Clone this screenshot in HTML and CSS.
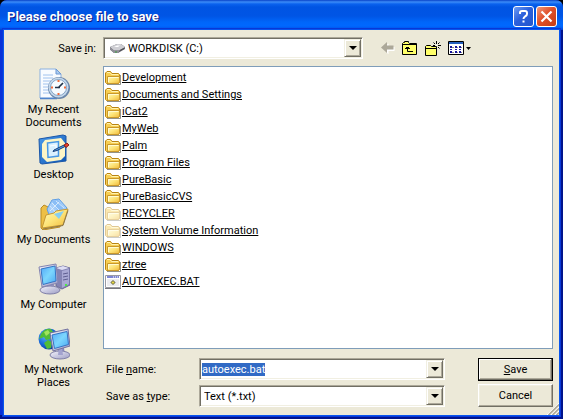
FILE: index.html
```html
<!DOCTYPE html>
<html lang="en">
<head>
<meta charset="utf-8">
<title>Please choose file to save</title>
<link rel="stylesheet" href="styles.css">
</head>
<body>
<svg class="defs" aria-hidden="true">
  <defs>
    <linearGradient id="gold" x1="0" y1="0" x2="1" y2="1">
      <stop offset="0" stop-color="#fffbc0"/><stop offset=".5" stop-color="#fde478"/><stop offset="1" stop-color="#f0b93a"/>
    </linearGradient>
    <linearGradient id="screen" x1="0" y1="0" x2="1" y2="1">
      <stop offset="0" stop-color="#52a8f8"/><stop offset=".5" stop-color="#7cd6fd"/><stop offset="1" stop-color="#4aa8f2"/>
    </linearGradient>
    <linearGradient id="metal" x1="0" y1="0" x2="1" y2="1">
      <stop offset="0" stop-color="#f4f4fc"/><stop offset="1" stop-color="#9c9cc4"/>
    </linearGradient>
    <linearGradient id="blue" x1="0" y1="0" x2="1" y2="1">
      <stop offset="0" stop-color="#4c9cec"/><stop offset="1" stop-color="#0c54b4"/>
    </linearGradient>
    <radialGradient id="globe" cx=".35" cy=".35" r=".7">
      <stop offset="0" stop-color="#58b8fc"/><stop offset=".6" stop-color="#1868d8"/><stop offset="1" stop-color="#0a3c9c"/>
    </radialGradient>
    <symbol id="folder" viewBox="0 0 16 16">
      <path d="M2 14.500h13.500V5" fill="none" stroke="#77776c" stroke-opacity=".8"/>
      <path d="M.5 12.500V3l1.500-1.500h3.500L7 3.500h6.500l1 1v8l-1 1h-12z" fill="#f7ce52" stroke="#b98413"/>
      <path d="M2 2.500h3l1.500 2H13" fill="none" stroke="#fff3b0"/>
      <path d="M2.500 13V6.500h12V12l-1 1.500H3z" fill="url(#gold)" stroke="#c9982b"/>
      <path d="M3.500 12V7.500h10" fill="none" stroke="#fffbd0"/>
    </symbol>
    <symbol id="batch" viewBox="0 0 16 16">
      <path d="M.5 1.500h15v12H.5z" fill="#fff" stroke="#9a9aa2"/>
      <path d="M0 14.500h16" stroke="#77777f"/>
      <path d="M2 2h12v2H2z" fill="#7d85d4"/>
      <path d="M8 3h1M10 3h1M12 3h1" stroke="#fff"/>
      <path d="M2 5h12v7H2z" fill="#ececf0"/>
      <path d="M8 6v5M5.500 8.500h5M6.500 7l3 3M9.500 7l-3 3" stroke="#84847c"/>
      <circle cx="8" cy="8.500" r="1.500" fill="#e8d840" stroke="#727246" stroke-width=".7"/>
    </symbol>
  </defs>
</svg>

<main class="window">
  <header class="titlebar">
    <h1>Please choose file to save</h1>
    <button class="caption help" type="button" aria-label="Help">
      <svg viewBox="0 0 19 19"><path d="M6 7V5.500Q6 4 8 4h3q2 0 2 2v1q0 1.500-2 2.500Q9.500 10.500 9.500 12M9.500 13.500v2" fill="none" stroke="#fff" stroke-width="2"/></svg>
    </button>
    <button class="caption close" type="button" aria-label="Close">
      <svg viewBox="0 0 19 19"><path d="M4.500 4.500l10 10M14.500 4.500l-10 10" stroke="#fff" stroke-width="2.200"/></svg>
    </button>
  </header>

  <form class="content">
    <label class="look-label" for="look">Save <u>i</u>n:</label>
    <div class="toolbar">
      <div class="field look">
        <svg class="disk" viewBox="0 0 16 16" aria-hidden="true">
          <path d="M1 9.500l4 3.500h4l7-4V7l-4-3H8L1 7z" fill="#66666c"/>
          <path d="M1 7l7-3h4l4 3-6 3.500H5z" fill="#cfcfd4"/>
          <path d="M1 7l4 3.500h5V13H5L1 9.500z" fill="#909098"/>
          <path d="M5 7l3-1.500h3L9 7z" fill="#fff"/>
          <path d="M11 10.500l4-2" stroke="#4c4c54"/>
          <path d="M6 12h2" stroke="#3c9c3c"/>
        </svg>
        <select id="look"><option>WORKDISK (C:)</option></select>
        <span class="arrow"></span>
      </div>
      <button class="tool back" type="button" aria-label="Back" disabled>
        <svg viewBox="0 0 14 12"><path d="M2 6.500L7.500 1.500V5H13.500v4H7.500v3.500z" fill="#fff"/><path d="M0 5.500L6 0v3.500h6.500v4H6V11z" fill="#aca899"/></svg>
      </button>
      <button class="tool up" type="button" aria-label="Up one level">
        <svg viewBox="0 0 15 14"><path d="M.5 13.500v-11l1-1h1v-1h4v1l1 1h7v11z" fill="#ffff6a" stroke="#000"/><path d="M1 3.500h13" stroke="#000"/><path d="M5.500 6v4.500H11" fill="none" stroke="#000"/><path d="M3 7.500h5M4 6.500h3" stroke="#000"/></svg>
      </button>
      <button class="tool new" type="button" aria-label="Create new folder">
        <svg viewBox="0 0 16 15"><path d="M.5 14.500v-9l1-1h4l1 1h5v9z" fill="#ffff6a" stroke="#000"/><path d="M1 7.500h11" stroke="#000"/><path d="M11.500 0v3M11.500 6v3M8 4.500h2M13 4.500h3M8.500 1.500l1.500 1.500M14.500 1.500L13 3M14.500 7.500L13 6" stroke="#000"/><path d="M11 4.500h1" stroke="#fff"/></svg>
      </button>
      <button class="tool view" type="button" aria-label="View menu">
        <svg viewBox="0 0 23 14"><path d="M.5.5h15v13H.5z" fill="#fff" stroke="#000"/><path d="M1 1h14v2H1z" fill="#235fbd"/><path d="M2 5h2v2H2zM7 5h2v2H7zM11 5h2v2h-2zM2 8h2v1H2zM7 8h2v1H7zM11 8h2v1h-2zM2 10h2v2H2zM7 10h2v2H7zM11 10h2v2h-2z" fill="#15159c"/><path d="M4 6.500h2M9 6.500h1M13 6.500h1M4 11.500h2M9 11.500h1M13 11.500h1" stroke="#888"/><path d="M18 6h5l-2.500 3z"/></svg>
      </button>
    </div>

    <nav class="places">
      <a href="#recent">
        <svg viewBox="0 0 32 32" aria-hidden="true">
          <path d="M2 1h16l5 5v24H2z" fill="#f8fbff" stroke="#8ab0e0"/>
          <path d="M18 1v5h5z" fill="#aacbf0" stroke="#6c98d4"/>
          <path d="M5 7h10M5 10h10M5 13h8M5 16h6M5 19h6M5 22h6M5 25h7" stroke="#a0c2ee"/>
          <path d="M2 30.500h17" stroke="#4f83cc" stroke-width="1.500"/>
          <circle cx="21" cy="20" r="11" fill="#6b87aa"/>
          <circle cx="20.500" cy="19.500" r="10" fill="#c4d8ec"/>
          <circle cx="20.500" cy="19.500" r="8" fill="#f6fbff" stroke="#85a3c4"/>
          <path d="M20 20l5-5M17 19.500h5" stroke="#223248" stroke-width="1.700"/>
          <path d="M19.500 12h2v2h-2zM19.500 25h2v2h-2zM13 18.500h2v2h-2zM26 18.500h2v2h-2z" fill="#ef6a3a"/>
        </svg>
        <span>My Recent<br>Documents</span>
      </a>
      <a href="#desktop">
        <svg viewBox="0 0 32 32" aria-hidden="true">
          <path d="M1 6l24-4 3 1v25L4 31l-2-1z" fill="url(#blue)" stroke="#1b57a8"/>
          <path d="M7 7l16-2 4 5v13l-4 4-14 2-5-5V11z" fill="#fdf5c6"/>
          <path d="M9.500 10l11-1.500V23L10 24.500z" fill="#d8f0ff" stroke="#4898e4" stroke-width="1.500"/>
          <path d="M12 13l6-1v8" fill="none" stroke="#fff"/>
          <path d="M16 17l10-5 1 1.500-8 4-4 1z" fill="#55a2e8" stroke="#143c78"/>
          <path d="M26 12l3-2 2 2-3 2.500z" fill="#e8402c" stroke="#8c2014"/>
        </svg>
        <span>Desktop</span>
      </a>
      <a href="#documents">
        <svg viewBox="0 0 32 32" aria-hidden="true">
          <path d="M3 10l3-3 4 2 1 2 13 2-2 16-17 3-2-2z" fill="#edbf45" stroke="#b88a24"/>
          <path d="M9 11l5-9 7-1 8 9-7 11-9 1z" fill="#a4cdf9" stroke="#5e9ee4"/>
          <path d="M14 3l6-1 6 8-5 5z" fill="#8abef6"/>
          <path d="M14 5l8 8M12 8l7 8M18 3l8 7M21 4l-9 9" stroke="#e4f2ff" stroke-width=".8"/>
          <path d="M4 30l4-13 8-2 2-2 12-2-5 16z" fill="url(#gold)" stroke="#c69833"/>
          <path d="M16 16l10-3-5 8z" fill="#86cef2"/>
          <path d="M5 31l20-3.500 5-15" fill="none" stroke="#8d7848"/>
        </svg>
        <span>My Documents</span>
      </a>
      <a href="#computer">
        <svg viewBox="0 0 32 32" aria-hidden="true">
          <path d="M18 5l7-2 7 2v17l-8 4-6-3z" fill="#8484b4" stroke="#686898"/>
          <path d="M24 8l7-2v15l-7 4z" fill="#a9a9d4"/>
          <path d="M18 5l7-2 6 2-7 2z" fill="#dedef4"/>
          <path d="M25 11l5-1M25 14l5-1M25 17l5-1" stroke="#5e5e90"/>
          <path d="M27 21h2v2h-2z" fill="#4bea40"/>
          <path d="M8 21h8l1 5H9z" fill="#9898c4"/>
          <ellipse cx="12" cy="27" rx="10" ry="4" fill="url(#metal)" stroke="#7f7fa8"/>
          <path d="M1 4l17-3 2 19-16 4z" fill="url(#metal)" stroke="#8484b0"/>
          <path d="M3 6l14-3 1 15-13 3.500z" fill="url(#screen)" stroke="#3674c4"/>
        </svg>
        <span>My Computer</span>
      </a>
      <a href="#network">
        <svg viewBox="0 0 32 32" aria-hidden="true">
          <circle cx="11" cy="11" r="10.500" fill="url(#globe)"/>
          <path d="M3 6q4-6 10-5l3 4-4 2 1 4-5 1-2-3-5 2zM10 12l4 2-1 6-4 1-3-6z" fill="#51bc38"/>
          <path d="M6 4l4-2 2 3-4 3z" fill="#a1e65c"/>
          <path d="M20 20h6l1 7h-8z" fill="#8888bc"/>
          <ellipse cx="22" cy="27" rx="10" ry="4" fill="url(#metal)" stroke="#7f7fa8"/>
          <path d="M21 19h3l1 8h-5z" fill="#a2a2ce"/>
          <path d="M12 5l18-4 2 17-17 5z" fill="url(#metal)" stroke="#71719f"/>
          <path d="M14 7l15-3.500 1.500 13-14 4z" fill="url(#screen)" stroke="#3674c4"/>
        </svg>
        <span>My Network<br>Places</span>
      </a>
    </nav>

    <ul class="files">
      <li><svg><use href="#folder"/></svg><a href="#f1">Development</a></li>
      <li><svg><use href="#folder"/></svg><a href="#f2">Documents and Settings</a></li>
      <li><svg><use href="#folder"/></svg><a href="#f3">iCat2</a></li>
      <li><svg><use href="#folder"/></svg><a href="#f4">MyWeb</a></li>
      <li><svg><use href="#folder"/></svg><a href="#f5">Palm</a></li>
      <li><svg><use href="#folder"/></svg><a href="#f6">Program Files</a></li>
      <li><svg><use href="#folder"/></svg><a href="#f7">PureBasic</a></li>
      <li><svg><use href="#folder"/></svg><a href="#f8">PureBasicCVS</a></li>
      <li class="hidden-item"><svg><use href="#folder"/></svg><a href="#f9">RECYCLER</a></li>
      <li class="hidden-item"><svg><use href="#folder"/></svg><a href="#f10">System Volume Information</a></li>
      <li><svg><use href="#folder"/></svg><a href="#f11">WINDOWS</a></li>
      <li><svg><use href="#folder"/></svg><a href="#f12">ztree</a></li>
      <li><svg><use href="#batch"/></svg><a href="#f13">AUTOEXEC.BAT</a></li>
    </ul>

    <div class="bottom">
      <div class="entries">
        <label for="name">File <u>n</u>ame:</label>
        <div class="field"><input id="name" type="text" value="autoexec.bat" spellcheck="false" autocomplete="off"><span class="arrow"></span></div>
        <label for="type">Save as <u>t</u>ype:</label>
        <div class="field"><select id="type"><option>Text (*.txt)</option></select><span class="arrow"></span></div>
      </div>
      <div class="actions">
        <button class="push default" type="button"><u>S</u>ave</button>
        <button class="push" type="button">Cancel</button>
      </div>
    </div>
  </form>
  <svg class="grip" viewBox="0 0 12 12" aria-hidden="true"><path d="M0 12L12 0M4 12l8-8M8 12l4-4" stroke="#fff"/><path d="M1.500 12L12 1.500M5.500 12L12 5.500M9.500 12L12 9.500" stroke="#aca899" stroke-width="1.600"/></svg>
</main>
<script src="script.js"></script>
</body>
</html>
```
FILE: script.js
```js
const nameField = document.getElementById("name");
nameField.focus();
nameField.select();
```
FILE: styles.css
```css
* {
  box-sizing: border-box;
}

body {
  margin: 0;
  background: #000;
  color: #000;
  font: 11px/13px Tahoma, Roboto, "Liberation Sans", sans-serif;
}

.defs {
  position: absolute;
  width: 0;
  height: 0;
}

button,
input,
select {
  font: inherit;
  color: inherit;
}

.window {
  position: relative;
  display: flex;
  flex-direction: column;
  min-height: 100vh;
  border-radius: 7px 7px 0 0;
  overflow: hidden;
  background: #00138c;
}

.titlebar {
  display: flex;
  align-items: center;
  gap: 2px;
  height: 30px;
  padding: 3px 6px 0 7px;
  background: linear-gradient(#0842c8 0, #3c8cf8 2px, #0a62ee 4px, #0054e3 7px, #0055e5 16px, #0066fa 22px, #0068ff 26px, #005af0 28px, #0042d0 30px);
}

.titlebar h1 {
  flex: 1;
  margin: 0;
  color: #fff;
  font: bold 13px/16px "Trebuchet MS", Roboto, sans-serif;
  text-shadow: 1px 1px #0a1883;
}

.caption {
  width: 21px;
  height: 21px;
  padding: 0;
  border: 1px solid #fff;
  border-radius: 3px;
}

.caption svg {
  display: block;
  width: 19px;
  height: 19px;
}

.help {
  background: linear-gradient(135deg, #6d9cf3, #2b60dc 45%, #2456cc);
}

.close {
  background: linear-gradient(135deg, #f0987a, #e0502a 45%, #c43c14);
}

.content {
  flex: 1;
  display: grid;
  grid-template-columns: 99px minmax(0, 1fr);
  grid-template-rows: 22px 1fr auto;
  row-gap: 7px;
  margin: 0 4px 4px;
  padding: 7px 6px 8px 0;
  background: #ece9d8;
  box-shadow: 0 0 0 1px #0855ee, 0 0 0 2px #0838d8, -4px 0 #0831d9;
}

.look-label {
  align-self: center;
  padding-right: 7px;
  text-align: right;
}

.toolbar {
  display: flex;
  align-items: center;
}

.field {
  display: flex;
  align-items: center;
  height: 22px;
  padding: 1px;
  background: #fff;
  border: 1px solid;
  border-color: #aca899 #fff #fff #aca899;
  box-shadow: inset 1px 1px #716f64, inset -1px -1px #f1efe2;
}

.field input,
.field select {
  flex: 1;
  min-width: 0;
  margin: 0;
  padding: 0 1px;
  border: 0;
  outline: 0;
  appearance: none;
  background: none;
}

.field select {
  padding: 0 3px;
}

.field input {
  height: 13px;
}

.field input::selection {
  background: #316ac5;
  color: #fff;
}

.look {
  flex: 0 1 260px;
}

.disk {
  width: 16px;
  height: 16px;
  margin-left: 4px;
}

.arrow {
  display: grid;
  place-items: center;
  width: 17px;
  height: 18px;
  background: #ece9d8;
  border: 1px solid;
  border-color: #f1efe2 #716f64 #716f64 #f1efe2;
  box-shadow: inset 1px 1px #fff, inset -1px -1px #aca899;
  pointer-events: none;
}

.arrow::before {
  content: "";
  border: 4px solid transparent;
  border-top-color: #000;
  border-bottom: 0;
}

.tool {
  display: grid;
  padding: 0;
  border: 0;
  background: none;
}

.back {
  margin-left: 18px;
}

.back svg {
  width: 14px;
  height: 12px;
}

.up {
  margin-left: 7px;
}

.up svg {
  width: 15px;
  height: 14px;
}

.new {
  margin-left: 8px;
}

.new svg {
  width: 16px;
  height: 15px;
}

.view {
  margin-left: 7px;
}

.view svg {
  width: 23px;
  height: 14px;
}

.places {
  grid-row: 2 / 4;
  display: grid;
  grid-auto-rows: 65px;
  padding-top: 2px;
}

.places a {
  display: flex;
  flex-direction: column;
  align-items: center;
  gap: 3px;
  color: inherit;
  text-align: center;
  text-decoration: none;
}

.places svg {
  width: 32px;
  height: 32px;
}

.files {
  margin: 0;
  padding: 2px 1px;
  border: 1px solid #7f9db9;
  background: #fff;
  list-style: none;
}

.files li {
  display: flex;
  align-items: center;
  gap: 1px;
  height: 17px;
}

.files svg {
  width: 16px;
  height: 16px;
}

.files a {
  color: inherit;
  text-decoration: underline;
  text-underline-offset: 1px;
}

.hidden-item svg {
  opacity: .45;
}

.bottom {
  display: flex;
  gap: 33px;
  padding-top: 2px;
}

.entries {
  flex: 1;
  display: grid;
  grid-template-columns: 93px minmax(0, 1fr);
  align-items: center;
  row-gap: 5px;
  padding-left: 3px;
}

.actions {
  display: grid;
  gap: 3px;
}

.push {
  width: 75px;
  height: 23px;
  padding: 0;
  background: #ece9d8;
  border: 1px solid;
  border-color: #fff #716f64 #716f64 #fff;
  box-shadow: inset -1px -1px #aca899, inset 1px 1px #f1efe2;
}

.default {
  border-color: #000;
  box-shadow: inset -1px -1px #716f64, inset 1px 1px #fff, inset -2px -2px #aca899;
}

.grip {
  position: absolute;
  right: 4px;
  bottom: 4px;
  width: 12px;
  height: 12px;
}
```
